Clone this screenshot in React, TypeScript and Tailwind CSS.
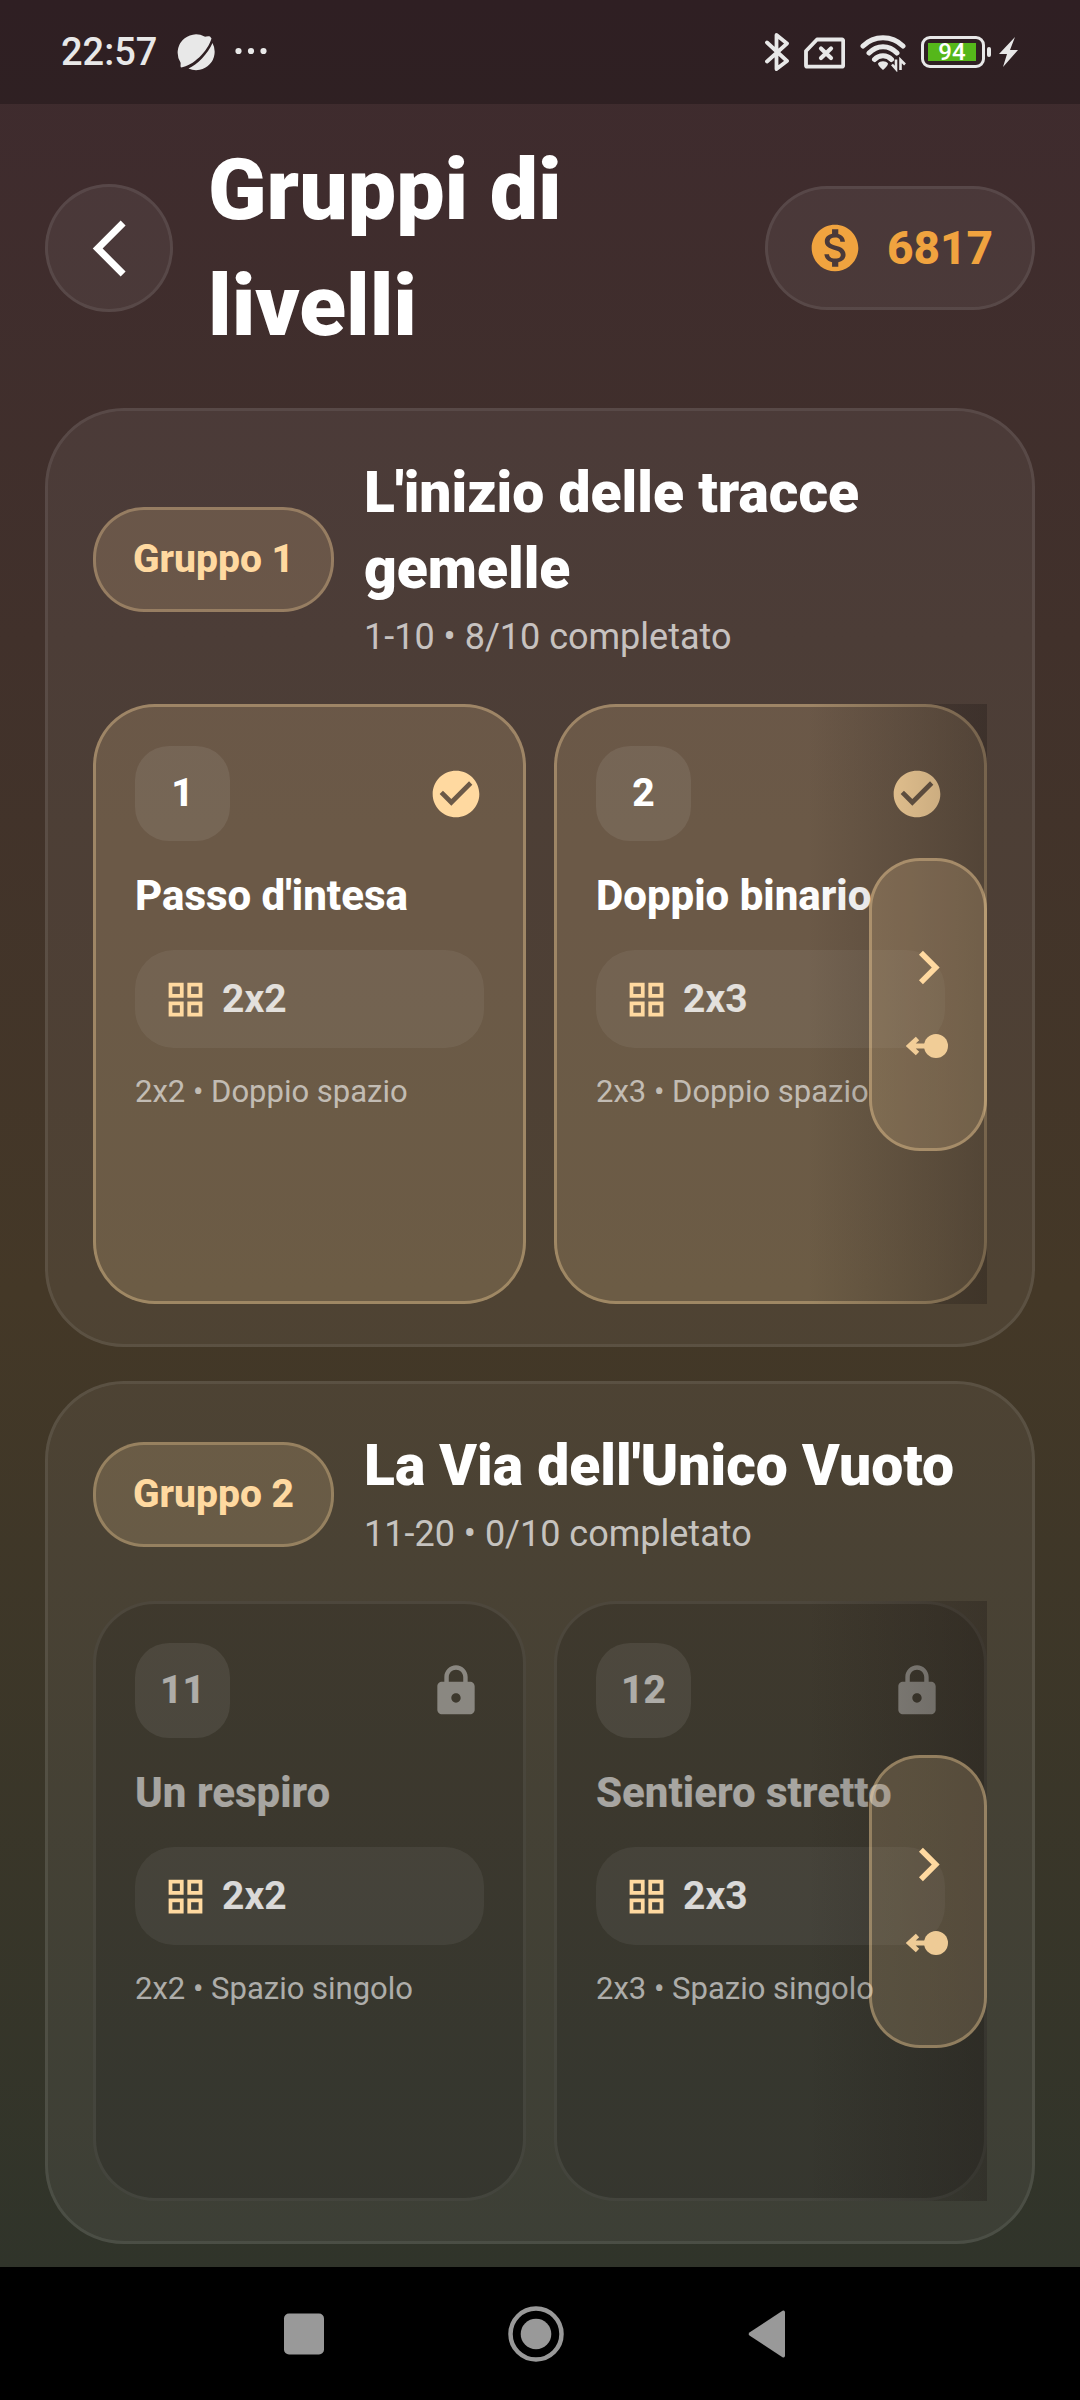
import type { ReactNode } from "react";
import { clsx } from "clsx";
import {
  MdArrowBackIosNew,
  MdCheckCircle,
  MdChevronRight,
  MdGridView,
  MdLock,
  MdMonetizationOn,
} from "react-icons/md";

interface Level {
  id: number;
  name: string;
  grid: string;
  space: string;
  unlocked: boolean;
}

interface LevelGroup {
  label: string;
  title: string;
  progress: string;
  levels: Level[];
}

const groups: LevelGroup[] = [
  {
    label: "Gruppo 1",
    title: "L'inizio delle tracce gemelle",
    progress: "1-10 • 8/10 completato",
    levels: [
      { id: 1, name: "Passo d'intesa", grid: "2x2", space: "Doppio spazio", unlocked: true },
      { id: 2, name: "Doppio binario", grid: "2x3", space: "Doppio spazio", unlocked: true },
    ],
  },
  {
    label: "Gruppo 2",
    title: "La Via dell'Unico Vuoto",
    progress: "11-20 • 0/10 completato",
    levels: [
      { id: 11, name: "Un respiro", grid: "2x2", space: "Spazio singolo", unlocked: false },
      { id: 12, name: "Sentiero stretto", grid: "2x3", space: "Spazio singolo", unlocked: false },
    ],
  },
];

const StatusBar = () => (
  <div className="flex h-[104px] items-center justify-between bg-black/24 pr-[61px] pl-[61px] text-[#e8e8e8]">
    <div className="flex items-center gap-5">
      <span className="text-[38px] leading-none font-medium">22:57</span>
      <svg className="h-[38px] w-[38px]" viewBox="0 0 38 38" fill="currentColor">
        <path d="M33 3.5C30 3 28 4 27.500 3.500A18.300 18.300 0 0 0 3.500 29.500C4 31 3 33 4 34.500C16 33 31 18 34.500 5.500Z" />
        <path d="M35.500 10A18.500 18.500 0 0 1 11.500 35.500C20 32 31 20.500 35.500 10Z" />
      </svg>
      <svg className="h-[38px] w-8" viewBox="0 0 32 38" fill="currentColor">
        <circle cx="3.500" cy="18" r="3.100" />
        <circle cx="16" cy="18" r="3.100" />
        <circle cx="28.500" cy="18" r="3.100" />
      </svg>
    </div>
    <div className="flex items-center gap-[15px]">
      <svg className="h-10 w-6" viewBox="0 0 24 40" fill="none" stroke="currentColor" strokeWidth="3.800" strokeLinecap="round" strokeLinejoin="round">
        <path d="M2 10.500 22 29 11.500 37V3L22 11.500 2 29.500" />
      </svg>
      <svg className="h-10 w-[41px]" viewBox="0 0 41 40" fill="none" stroke="currentColor" strokeLinejoin="round" strokeLinecap="round">
        <path strokeWidth="3.800" d="M13 7.500H38a1.200 1.200 0 0 1 1.200 1.200V33.500a1.200 1.200 0 0 1-1.200 1.200H3.200A1.200 1.200 0 0 1 2 33.500V19Z" />
        <path strokeWidth="4.200" d="m17 16.500 10 9.500m0-9.500L17 26" />
      </svg>
      <svg className="h-10 w-[46px]" viewBox="0 0 46 40" fill="none" stroke="currentColor" strokeWidth="4.600">
        <path strokeWidth="5" strokeLinecap="round" d="M3 14C14 3 32 3 43 14M9 21C17 12.500 29 12.500 37 21M14.500 27.500C19 22.500 27 22.500 31.500 27.500" />
        <path fill="currentColor" stroke="none" d="M18 31.500c2-3 8-3 10 0q0 2-5 6.500q-5-4.500-5-6.500Z" />
        <path strokeWidth="2.600" d="M36 27.500V37l-4-4.500M40.500 38V28l4.500 4.500" />
      </svg>
      <div className="flex items-center gap-0.5">
        <div className="flex h-8 w-16 items-center rounded-[9px] border-3 border-current p-1">
          <span className="flex h-[18px] w-12 items-center justify-center bg-[#55b71a] text-[24px] leading-none font-medium text-white">
            94
          </span>
        </div>
        <span className="h-2.5 w-1 rounded-sm bg-current" />
        <svg className="ml-1.5 h-[30px] w-5" viewBox="0 0 20 30" fill="currentColor">
          <path d="M16 0 0 17h8L4 30 19 13h-8Z" />
        </svg>
      </div>
    </div>
  </div>
);

const Header = () => (
  <header className="flex items-center px-[45px] pt-7 pb-11">
    <button
      type="button"
      aria-label="Indietro"
      className="flex h-32 w-32 shrink-0 items-center justify-center rounded-full border-3 border-white/8 bg-white/6 text-white"
    >
      <MdArrowBackIosNew className="h-[67px] w-[67px]" />
    </button>
    <h1 className="ml-[35px] flex-1 pr-24 text-[86px] leading-[116px] font-black text-white">
      Gruppi di livelli
    </h1>
    <div className="flex h-[124px] shrink-0 items-center gap-6 rounded-full border-3 border-white/8 bg-white/6 px-[39px] text-[#f0a33f]">
      <MdMonetizationOn className="h-14 w-14" />
      <span className="text-[46px] leading-none font-extrabold">6817</span>
    </div>
  </header>
);

const LevelCard = ({ level }: { level: Level }) => {
  const { id, name, grid, space, unlocked } = level;

  return (
    <button
      type="button"
      disabled={!unlocked}
      className={clsx(
        "flex h-[600px] min-w-0 flex-col items-stretch rounded-[62px] border-3 p-[39px] text-left",
        unlocked
          ? "border-[#ffd9a0]/35 bg-[#ffd9a0]/17"
          : "border-white/7 bg-black/13"
      )}
    >
      <span className="flex items-center justify-between">
        <span
          className={clsx(
            "flex h-[95px] w-[95px] items-center justify-center rounded-[34px] bg-white/8 text-[39px] font-extrabold",
            unlocked ? "text-white" : "text-white/55"
          )}
        >
          {id}
        </span>
        {unlocked ? (
          <MdCheckCircle className="h-14 w-14 text-[#ffd9a0]" />
        ) : (
          <MdLock className="h-14 w-14 text-white/40" />
        )}
      </span>
      <span
        className={clsx(
          "mt-[26px] text-[42px] leading-[57px] font-extrabold whitespace-nowrap",
          unlocked ? "text-white" : "text-white/55"
        )}
      >
        {name}
      </span>
      <span className="mt-[26px] flex h-[98px] items-center gap-3.5 rounded-[39px] bg-white/6 px-7">
        <MdGridView className="h-[45px] w-[45px] text-[#ffd9a0]" />
        <span className="text-[39px] leading-none font-bold text-white/80">{grid}</span>
      </span>
      <span className="mt-[22px] text-[31px] leading-[44px] whitespace-nowrap text-white/60">
        {grid} • {space}
      </span>
    </button>
  );
};

// fade on the right edge plus the "more levels" capsule
const ScrollHint = () => (
  <>
    <div className="pointer-events-none absolute inset-y-0 right-0 w-[180px] bg-linear-to-r from-[#1a1412]/0 to-[#1a1412]/30" />
    <div className="pointer-events-none absolute inset-y-0 right-0 flex items-center">
      <div className="flex h-[293px] w-[118px] flex-col items-center justify-center gap-5 rounded-[51px] border-3 border-[#ffd9a0]/35 bg-[#ffd9a0]/18 pb-1 text-[#ffd9a0]">
        <MdChevronRight className="h-[67px] w-[67px]" />
        <svg className="h-[50px] w-11 opacity-90" viewBox="0 0 44 50" fill="none" stroke="currentColor" strokeWidth="5">
          <path d="M22 25H4M11.500 17.500 3.500 25l8 7.500" />
          <circle cx="30" cy="25" r="12" fill="currentColor" stroke="none" />
        </svg>
      </div>
    </div>
  </>
);

const GroupPanel = ({ group }: { group: LevelGroup }) => (
  <section className="rounded-[79px] border-3 border-white/8 bg-white/6 px-[45px] pt-11 pb-10">
    <div className="flex items-center gap-[30px]">
      <span className="flex h-[105px] w-[241px] shrink-0 items-center justify-center rounded-[51px] border-3 border-[#ffd9a0]/30 bg-[#ffd9a0]/17 text-[39px] font-extrabold text-[#ffd9a0]">
        {group.label}
      </span>
      <div className="min-w-0 flex-1">
        <h2 className="text-[57px] leading-[76px] font-black text-white">{group.title}</h2>
        <p className="mt-1 text-[36px] leading-[53px] text-white/70">{group.progress}</p>
      </div>
    </div>
    <div className="relative mt-10 grid grid-cols-2 gap-7">
      {group.levels.map((level) => (
        <LevelCard key={level.id} level={level} />
      ))}
      <ScrollHint />
    </div>
  </section>
);

const NavButton = ({ label, children }: { label: string; children: ReactNode }) => (
  <button type="button" aria-label={label} className="h-14 w-14">
    <svg className="h-full w-full" viewBox="0 0 56 56" fill="#999">
      {children}
    </svg>
  </button>
);

const NavigationBar = () => (
  <nav className="flex h-[133px] items-center justify-center gap-44 bg-black pr-2">
    <NavButton label="Recenti">
      <rect x="8" y="7.500" width="40" height="41" rx="5" />
    </NavButton>
    <NavButton label="Home">
      <circle cx="28" cy="28" r="25.500" fill="none" stroke="#999" strokeWidth="4.500" />
      <circle cx="28" cy="28" r="15.300" />
    </NavButton>
    <NavButton label="Indietro">
      <path d="M9.800 26.200 42.500 4.800Q45 4 45 6.500V49.500Q45 52 42.500 51.200L9.800 29.800Q7.500 28 9.800 26.200Z" />
    </NavButton>
  </nav>
);

export default function App() {
  return (
    <div className="flex min-h-screen flex-col bg-black font-[Roboto,'Liberation_Sans',sans-serif]">
      <div className="flex-1 bg-linear-to-b from-[#3e2a2e] via-[#443827] via-57% to-[#30342a]">
        <StatusBar />
        <Header />
        <main className="flex flex-col gap-[34px] px-[45px] pb-[23px]">
          {groups.map((group) => (
            <GroupPanel key={group.label} group={group} />
          ))}
        </main>
      </div>
      <NavigationBar />
    </div>
  );
}
